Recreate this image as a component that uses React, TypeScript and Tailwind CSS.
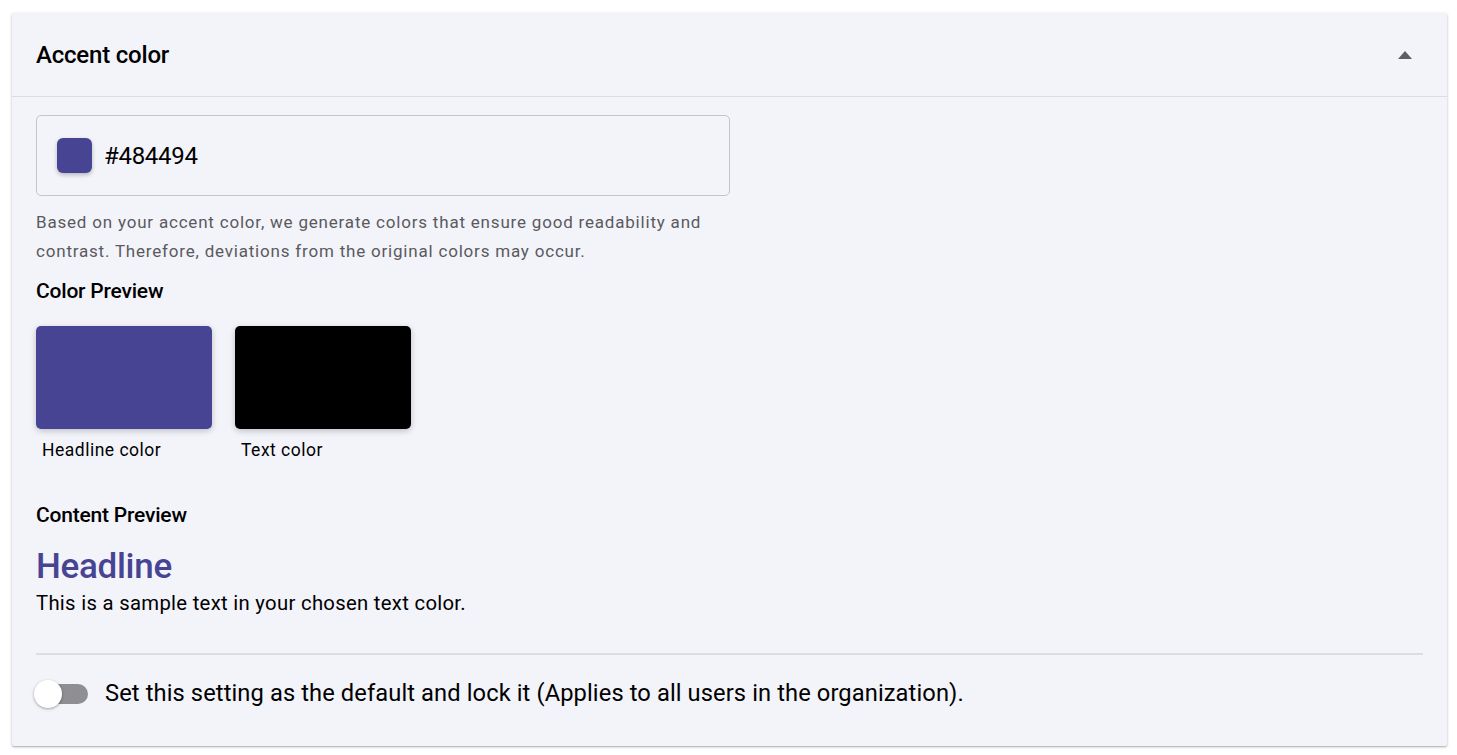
import React from "react";

export default function App() {
  return (
    <div className="min-h-[755px] w-full bg-white pt-[13px] px-[12px] pb-[10px]" style={{ fontFamily: "Roboto, 'Liberation Sans', sans-serif" }}>
      <div className="w-[1435px] bg-[#f3f3fa] rounded-[2px] shadow-[0_1px_3px_rgba(0,0,0,0.25),0_1px_1px_rgba(0,0,0,0.12)]">
        <div className="h-[84px] flex items-center justify-between pl-[24px] pr-[35px] border-b border-[#dcdce3]">
          <span className="text-[24px] font-medium text-black tracking-[-0.2px]">Accent color</span>
          <svg width="14" height="8" viewBox="0 0 14 8"><path d="M0 8 L7 0 L14 8 Z" fill="#5f5f63" /></svg>
        </div>
        <div className="px-[24px] pt-[18px] pb-[34px]">
          <div className="w-[694px] h-[81px] border border-[#c4c4c9] rounded-[5px] flex items-center pl-[20px]">
            <div className="w-[35px] h-[35px] rounded-[6px] bg-[#484494] shadow-[0_2px_4px_rgba(0,0,0,0.25)]" />
            <span className="ml-[12px] text-[24px] text-black tracking-[-0.3px]">#484494</span>
          </div>
          <p className="mt-[12px] text-[17px] leading-[29px] text-[#5a5a5e] tracking-[0.8px] w-[694px]">
            Based on your accent color, we generate colors that ensure good readability and contrast. Therefore, deviations from the original colors may occur.
          </p>
          <div className="mt-[12px] text-[21px] font-medium text-black leading-[26px] tracking-[-0.2px]">Color Preview</div>
          <div className="mt-[22px] flex gap-[23px]">
            <div className="flex flex-col">
              <div className="w-[176px] h-[103px] rounded-[5px] bg-[#484494] shadow-[0_2px_6px_rgba(0,0,0,0.22)]" />
              <span className="mt-[9px] ml-[6px] text-[17.5px] tracking-[0.5px] text-black leading-[24px]">Headline color</span>
            </div>
            <div className="flex flex-col">
              <div className="w-[176px] h-[103px] rounded-[5px] bg-black shadow-[0_2px_6px_rgba(0,0,0,0.22)]" />
              <span className="mt-[9px] ml-[6px] text-[17.5px] tracking-[0.5px] text-black leading-[24px]">Text color</span>
            </div>
          </div>
          <div className="mt-[40px] text-[21px] font-medium text-black leading-[26px] tracking-[-0.2px]">Content Preview</div>
          <div className="mt-[19px] text-[35px] font-medium text-[#484494] leading-[40px] tracking-[-0.3px]">Headline</div>
          <div className="mt-[2px] text-[20.3px] text-black leading-[28px] tracking-[0.3px]">This is a sample text in your chosen text color.</div>
          <div className="mt-[36px] h-[2px] bg-[#dcdce3]" />
          <div className="mt-[21px] flex items-center">
            <div className="relative w-[56px] h-[28px] flex items-center">
              <div className="absolute left-[4px] w-[48px] h-[20px] rounded-full bg-[#8e8e93]" />
              <div className="absolute left-[-2px] w-[28px] h-[28px] rounded-full bg-white shadow-[0_1px_3px_rgba(0,0,0,0.35)]" />
            </div>
            <span className="ml-[13px] text-[23.7px] text-black tracking-[0.1px]">Set this setting as the default and lock it (Applies to all users in the organization).</span>
          </div>
        </div>
      </div>
    </div>
  );
}
